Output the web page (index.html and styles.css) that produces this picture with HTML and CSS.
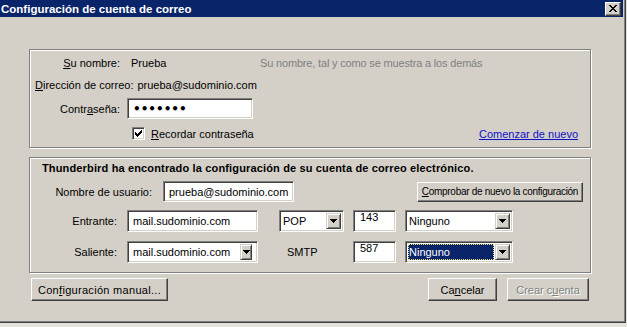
FILE: index.html
```html
<!DOCTYPE html>
<html lang="es">
<head>
    <meta charset="UTF-8">
    <title>Configuración de cuenta de correo</title>
    <link rel="stylesheet" href="styles.css">
</head>
<body>

    <div class="window">
        <div class="titlebar">
            <span class="title">Configuración de cuenta de correo</span>
            <button class="close" aria-label="Cerrar">
                <svg width="8" height="7" viewBox="0 0 8 7" shape-rendering="crispEdges"><path d="M0 0h2v1H0zM6 0h2v1H6zM1 1h2v1H1zM5 1h2v1H5zM2 2h4v1H2zM3 3h2v1H3zM2 4h4v1H2zM1 5h2v1H1zM5 5h2v1H5zM0 6h2v1H0zM6 6h2v1H6z" fill="#000"/></svg>
            </button>
        </div>

        <div class="content">
            <div class="group account">
                <div class="row r-name">
                    <span class="label w90"><u>S</u>u nombre:</span>
                    <span class="name-value">Prueba</span>
                    <span class="hint">Su nombre, tal y como se muestra a los demás</span>
                </div>
                <div class="row r-mail">
                    <span class="label mail-label"><u>D</u>irección de correo:</span>
                    <span class="mail-value">prueba@sudominio.com</span>
                </div>
                <div class="row r-pass">
                    <span class="label w90">Contr<u>a</u>seña:</span>
                    <input class="field pass" type="password" value="secreto">
                </div>
                <div class="row r-remember">
                    <span class="checkbox">
                        <svg width="7" height="7" viewBox="0 0 7 7" shape-rendering="crispEdges"><path d="M6 0h1v1H6zM5 1h2v1H5zM0 2h1v1H0zM4 2h3v1H4zM0 3h2v1H0zM3 3h3v1H3zM0 4h5v1H0zM1 5h3v1H1zM2 6h1v1H2z" fill="#000"/></svg>
                    </span>
                    <span class="check-label"><u>R</u>ecordar contraseña</span>
                    <a class="restart" href="#">Comenzar de nuevo</a>
                </div>
            </div>

            <div class="group found">
                <div class="heading">Thunderbird ha encontrado la configuración de su cuenta de correo electrónico.</div>
                <div class="row r-user">
                    <span class="label w122">Nombre de usuario:</span>
                    <input class="field user" type="text" value="prueba@sudominio.com">
                    <button class="btn recheck"><u>C</u>omprobar de nuevo la configuración</button>
                </div>
                <div class="row r-server">
                    <span class="label w87">Entrante:</span>
                    <input class="field host" type="text" value="mail.sudominio.com">
                    <div class="select proto">
                        <span class="value">POP</span>
                        <span class="drop"><svg width="7" height="4" viewBox="0 0 7 4" shape-rendering="crispEdges"><path d="M0 0h7v1H0zM1 1h5v1H1zM2 2h3v1H2zM3 3h1v1H3z" fill="#000"/></svg></span>
                    </div>
                    <input class="field port" type="text" value="143">
                    <div class="select security">
                        <span class="value">Ninguno</span>
                        <span class="drop"><svg width="7" height="4" viewBox="0 0 7 4" shape-rendering="crispEdges"><path d="M0 0h7v1H0zM1 1h5v1H1zM2 2h3v1H2zM3 3h1v1H3z" fill="#000"/></svg></span>
                    </div>
                </div>
                <div class="row r-server r-out">
                    <span class="label w87">Saliente:</span>
                    <div class="field combo">
                        <span class="value">mail.sudominio.com</span>
                        <span class="drop small"><svg width="7" height="4" viewBox="0 0 7 4" shape-rendering="crispEdges"><path d="M0 0h7v1H0zM1 1h5v1H1zM2 2h3v1H2zM3 3h1v1H3z" fill="#000"/></svg></span>
                    </div>
                    <span class="proto-text">SMTP</span>
                    <input class="field port" type="text" value="587">
                    <div class="select security focused">
                        <span class="value">Ninguno</span>
                        <span class="drop"><svg width="7" height="4" viewBox="0 0 7 4" shape-rendering="crispEdges"><path d="M0 0h7v1H0zM1 1h5v1H1zM2 2h3v1H2zM3 3h1v1H3z" fill="#000"/></svg></span>
                    </div>
                </div>
            </div>

            <div class="actions">
                <button class="btn manual">Con<u>f</u>iguración manual...</button>
                <button class="btn cancel">Ca<u>n</u>celar</button>
                <button class="btn create" disabled>Crear c<u>u</u>enta</button>
            </div>
        </div>
    </div>

</body>
</html>
```

FILE: styles.css
```css
* { box-sizing: border-box; }
body {
    margin: 0;
    width: 627px;
    height: 327px;
    overflow: hidden;
    background: #e4e2dc;
    font-family: "Liberation Sans", Arial, sans-serif;
    font-size: 11px;
    color: #000;
}
.window {
    width: 626px;
    height: 323px;
    background: #d4d0c8;
    border-right: 1px solid #404040;
    border-bottom: 1px solid #404040;
    box-shadow: inset -1px -1px 0 #808080;
}
.titlebar {
    height: 17px;
    margin-right: 2px;
    padding: 0 2px 0 1px;
    background: #0a246a;
    display: flex;
    align-items: center;
    justify-content: space-between;
}
.title {
    color: #fff;
    font-weight: bold;
    font-size: 11.5px;
}
.close {
    width: 16px;
    height: 14px;
    padding: 0;
    background: #d4d0c8;
    border: 1px solid;
    border-color: #fff #404040 #404040 #fff;
    box-shadow: inset -1px -1px 0 #808080;
    display: flex;
    align-items: center;
    justify-content: center;
}
.content { padding: 32px 0 0 29px; }

/* etched group boxes */
.group {
    width: 562px;
    border: 1px solid #808080;
    box-shadow: inset 1px 1px 0 #fff, 1px 1px 0 #fff;
}
.account { height: 99px; padding: 2px 12px 0 0; }
.found { height: 116px; margin-top: 9px; padding: 0 7px 0 0; }

.row { display: flex; align-items: center; white-space: nowrap; }
.label { text-align: right; flex-shrink: 0; }
.w90 { width: 90px; }
.w122 { width: 122px; }
.w87 { width: 87px; }

.r-name { height: 22px; }
.name-value { width: 129px; margin-left: 11px; }
.hint { color: #808080; letter-spacing: -0.17px; }
.r-mail { height: 22px; }
.mail-label { padding-left: 5px; }
.mail-value { margin-left: 4px; }
.r-pass { height: 25px; }
.r-remember { height: 25px; }

.field {
    height: 21px;
    background: #fff;
    border: 1px solid;
    border-color: #808080 #fff #fff #808080;
    box-shadow: inset 1px 1px 0 #404040, inset -1px -1px 0 #d4d0c8;
    font: inherit;
    color: #000;
    padding: 0 0 0 5px;
    outline: none;
}
.pass {
    width: 126px;
    margin-left: 7px;
    font-family: "DejaVu Sans", sans-serif;
    font-size: 12px;
    font-weight: bold;
    letter-spacing: 0;
    padding-left: 5px;
}
.checkbox {
    width: 13px;
    height: 13px;
    margin-left: 102px;
    background: #fff;
    border: 1px solid;
    border-color: #808080 #fff #fff #808080;
    box-shadow: inset 1px 1px 0 #404040, inset -1px -1px 0 #d4d0c8;
    display: flex;
    align-items: center;
    justify-content: center;
}
.check-label { margin-left: 6px; }
.restart {
    margin-left: auto;
    color: #1010c8;
    text-decoration: underline;
}

.heading {
    height: 20px;
    padding-left: 12px;
    font-weight: bold;
    letter-spacing: 0.15px;
    display: flex;
    align-items: center;
}
.r-user { height: 21px; margin-top: 3px; }
.user { width: 131px; margin-left: 11px; }

.r-server { height: 22px; margin-top: 8px; }
.r-out { margin-top: 9px; }
.host { width: 131px; height: 22px; margin-left: 10px; }
.port {
    width: 43px;
    height: 22px;
    margin-left: 9px;
    padding: 0 0 8px 6px;
}

.select {
    height: 22px;
    display: flex;
    padding: 2px;
    background: #fff;
    border: 1px solid;
    border-color: #808080 #fff #fff #808080;
    box-shadow: inset 1px 1px 0 #404040, inset -1px -1px 0 #d4d0c8;
}
.select .value {
    flex: 1;
    display: flex;
    align-items: center;
    padding-left: 1px;
}
.proto { width: 65px; margin-left: 21px; }
.security { width: 108px; margin-left: 9px; }
.focused .value {
    background: #0a246a;
    color: #fff;
    outline: 1px dotted #e8e070;
    outline-offset: -1px;
    margin-right: 1px;
}

.drop {
    width: 15px;
    background: #d4d0c8;
    border: 1px solid;
    border-color: #d4d0c8 #404040 #404040 #d4d0c8;
    box-shadow: inset 1px 1px 0 #fff, inset -1px -1px 0 #808080;
    display: flex;
    align-items: center;
    justify-content: center;
}
.combo {
    width: 131px;
    height: 22px;
    margin-left: 10px;
    display: flex;
    padding: 2px 5px 2px 5px;
}
.combo .value { flex: 1; display: flex; align-items: center; }
.drop.small { width: 12px; }
.proto-text { width: 65px; margin-left: 21px; padding-left: 8px; }

.btn {
    height: 23px;
    padding: 0;
    background: #d4d0c8;
    border: 1px solid;
    border-color: #fff #404040 #404040 #fff;
    box-shadow: inset -1px -1px 0 #808080;
    font: inherit;
    color: #000;
    white-space: nowrap;
}
.btn.recheck {
    width: 166px;
    height: 20px;
    margin-left: auto;
    font-size: 10px;
    letter-spacing: -0.3px;
}
.actions {
    width: 562px;
    margin-top: 5px;
    padding: 0 2px;
    display: flex;
}
.manual { width: 137px; letter-spacing: 0.3px; }
.cancel { width: 69px; margin-left: auto; }
.create {
    width: 82px;
    margin-left: 10px;
    color: #808080;
    text-shadow: 1px 1px 0 #fff;
}
```
